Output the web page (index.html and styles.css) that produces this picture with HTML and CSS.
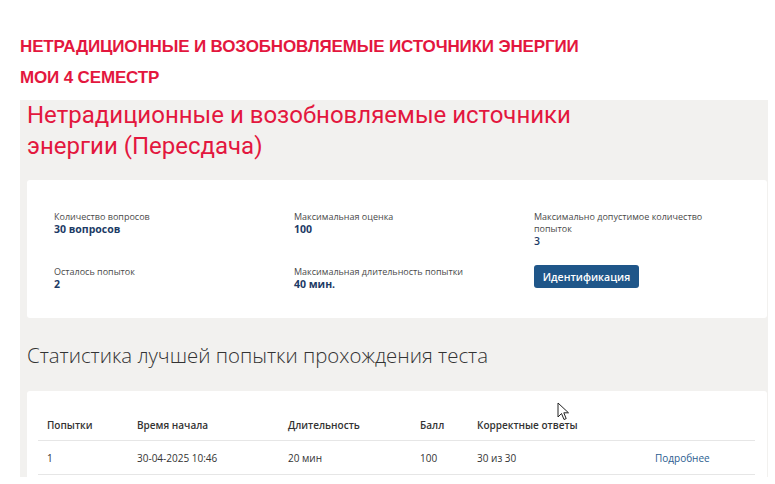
FILE: index.html
```html
<!DOCTYPE html>
<html lang="ru">
<head>
<meta charset="utf-8">
<title>Тест</title>
<link rel="stylesheet" href="styles.css">
</head>
<body>
<header class="crumbs">
  <div class="crumb">НЕТРАДИЦИОННЫЕ И ВОЗОБНОВЛЯЕМЫЕ ИСТОЧНИКИ ЭНЕРГИИ</div>
  <div class="crumb crumb-2">МОИ 4 СЕМЕСТР</div>
</header>
<main class="panel">
  <h1 class="title">Нетрадиционные и возобновляемые источники<br>энергии (Пересдача)</h1>
  <section class="card info">
    <div class="info-grid">
      <div class="item">
        <div class="label">Количество вопросов</div>
        <div class="value">30 вопросов</div>
      </div>
      <div class="item">
        <div class="label">Максимальная оценка</div>
        <div class="value">100</div>
      </div>
      <div class="item">
        <div class="label">Максимально допустимое количество<br>попыток</div>
        <div class="value value-plain">3</div>
      </div>
      <div class="item">
        <div class="label">Осталось попыток</div>
        <div class="value">2</div>
      </div>
      <div class="item">
        <div class="label">Максимальная длительность попытки</div>
        <div class="value">40 мин.</div>
      </div>
      <div class="item">
        <button class="btn">Идентификация</button>
      </div>
    </div>
  </section>
  <h2 class="subtitle">Статистика лучшей попытки прохождения теста</h2>
  <section class="card stats">
    <table class="table">
      <thead>
        <tr>
          <th class="c1">Попытки</th>
          <th class="c2">Время начала</th>
          <th class="c3">Длительность</th>
          <th class="c4">Балл</th>
          <th class="c5">Корректные ответы</th>
          <th class="c6"></th>
        </tr>
      </thead>
      <tbody>
        <tr>
          <td>1</td>
          <td>30-04-2025 10:46</td>
          <td>20 мин</td>
          <td>100</td>
          <td>30 из 30</td>
          <td><a class="more" href="#">Подробнее</a></td>
        </tr>
      </tbody>
    </table>
    <svg class="cursor" width="14" height="20" viewBox="0 0 14 20" aria-hidden="true">
      <path d="M1 1 L1 15 L4.5 11.5 L7 17.5 L9.2 16.6 L6.8 10.8 L11.5 10.8 Z" fill="#fff" stroke="#222" stroke-width="1" stroke-linejoin="round"/>
    </svg>
  </section>
</main>
</body>
</html>
```
FILE: styles.css
```css
html, body {
  margin: 0;
  padding: 0;
  background: #ffffff;
}
body {
  width: 775px;
  height: 484px;
  overflow: hidden;
  font-family: "Open Sans", "Noto Sans", sans-serif;
}
.crumbs {
  padding: 38px 0 0 20px;
  height: 100px;
  box-sizing: border-box;
}
.crumb {
  font-family: "Liberation Sans", Arial, sans-serif;
  font-weight: 700;
  font-size: 17px;
  line-height: 17px;
  color: #e3173e;
  letter-spacing: -0.15px;
}
.crumb-2 {
  margin-top: 14px;
}
.panel {
  margin-left: 20px;
  width: 748px;
  height: 377px;
  background: #f2f1ef;
  box-sizing: border-box;
  padding: 0 1px 0 7px;
  overflow: hidden;
}
.title {
  margin: 0;
  padding-top: 0;
  font-family: Roboto, "Noto Sans", sans-serif;
  font-weight: 400;
  font-size: 24px;
  line-height: 31px;
  color: #e3173e;
  height: 80px;
  letter-spacing: 0;
}
.card {
  background: #ffffff;
  border-radius: 3px;
}
.info {
  height: 138px;
  box-sizing: border-box;
  padding: 31px 27px 0 27px;
}
.info-grid {
  display: grid;
  grid-template-columns: 240px 240px 1fr;
  row-gap: 10px;
}
.item {
  min-height: 45px;
}
.label {
  font-size: 9px;
  line-height: 12px;
  color: #4a4a4a;
}
.value {
  font-size: 10.5px;
  font-weight: 700;
  line-height: 13px;
  color: #1d3b66;
}
.value-plain {
  font-weight: 600;
  color: #1d3b66;
}
.btn {
  display: block;
  margin-top: -1px;
  width: 105px;
  height: 23px;
  border: none;
  border-radius: 3px;
  background: #1f5689;
  color: #ffffff;
  font-family: "Open Sans", "Noto Sans", sans-serif;
  font-size: 10.5px;
  font-weight: 600;
  padding: 0;
}
.subtitle {
  margin: 0;
  height: 73px;
  box-sizing: border-box;
  padding-top: 24px;
  font-family: "Open Sans", "Noto Sans", sans-serif;
  font-weight: 300;
  font-size: 20.4px;
  line-height: 26px;
  color: #333333;
}
.stats {
  position: relative;
  height: 200px;
  box-sizing: border-box;
  padding: 24px 12px 0 11px;
}
.table {
  width: 100%;
  border-collapse: collapse;
  font-size: 10px;
  color: #333333;
}
.table th {
  text-align: left;
  font-weight: 600;
  padding: 3px 0 8px 9px;
  border-bottom: 1px solid #e6e6e6;
  height: 10px;
}
.table td {
  padding: 10px 0 9px 9px;
  border-bottom: 1px solid #e6e6e6;
}
.c1 { width: 81px; }
.c2 { width: 142px; }
.c3 { width: 123px; }
.c4 { width: 48px; }
.c5 { width: 169px; }
.more {
  color: #2b5d91;
  text-decoration: none;
}
.cursor {
  position: absolute;
  left: 530px;
  top: 11px;
}
```
